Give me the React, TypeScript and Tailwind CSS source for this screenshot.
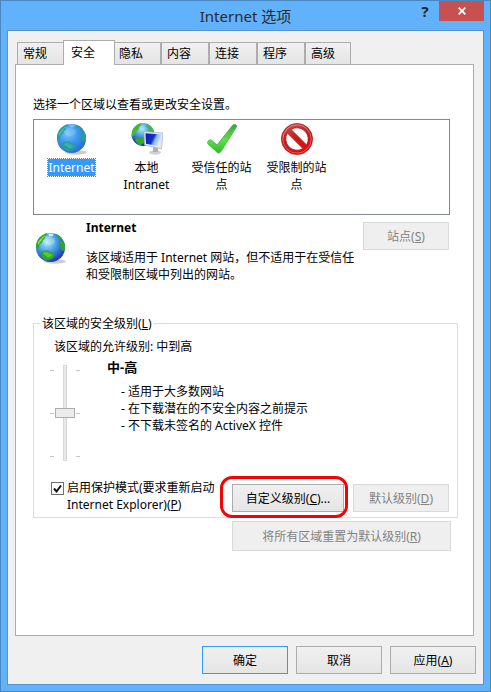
import { useState } from "react";
import type { ReactNode } from "react";

const tabs = ["常规", "安全", "隐私", "内容", "连接", "程序", "高级"];

const levelNotes = [
  "- 适用于大多数网站",
  "- 在下载潜在的不安全内容之前提示",
  "- 不下载未签名的 ActiveX 控件",
];

function Globe({ id, selected }: { id: string; selected?: boolean }) {
  const land = selected ? "#2b9c9c" : "#2fa52c";
  const landLight = selected ? "#4fb4bf" : "#7fdc48";
  return (
    <svg viewBox="0 0 32 32" className="block h-8 w-8" aria-hidden="true">
      <defs>
        <radialGradient id={id} cx="0.38" cy="0.32" r="0.72">
          <stop offset="0" stopColor={selected ? "#79c6fa" : "#b5ecfd"} />
          <stop offset="0.5" stopColor={selected ? "#3b95ee" : "#3f97e4"} />
          <stop offset="1" stopColor={selected ? "#2569d4" : "#1c30ac"} />
        </radialGradient>
      </defs>
      <ellipse cx="20" cy="29.500" rx="11" ry="2.200" fill="#000" opacity="0.2" />
      <circle cx="15.500" cy="15.500" r="14.600" fill={`url(#${id})`} />
      <path d="M2 9.500C4 5 8 2 12 1.300l-.5 2-2 1 .8 2-2.300 1.700-1 2.500-2.500 2-.5 3-2 2.500C.8 15 1 12 2 9.500z" fill={land} />
      <path d="M4.500 8c1.500-2 3.500-4 5.500-4.800l-.5 1.800-2 1.500-.5 2-2.300 2-.7 2-1.500-1c0-1.200 1-2.300 2-3.500z" fill={landLight} />
      <path d="M5.500 20.500l3-1.800 4.500-.2 2.500 1.500 3.500 1 .8 2.500-2.300 3-4 1.800-3.500 0C7.500 26.500 5.500 23.500 5.500 20.500z" fill={land} />
      <path d="M7.500 21l2.500-1 3 .2 2 1.600 2.500.6-1.500 2-3 1.200z" fill={landLight} opacity="0.6" />
      <path d="M24.500 11l1.500-2 2.300-.5c1.300 2.500 2 5 1.700 8.500L28 19l-1.700-1-.5-2.500-1.600-2z" fill={land} />
      <path d="M20 2.200l3 .6 3 2.200 1.500 2.500-2.500-.5-2-2-2.500-.8z" fill={land} />
      <path d="M13 1.500l5.500.3-.5 2.200-3.500.5z" fill="#e8faff" opacity={selected ? 0.35 : 0.8} />
      <ellipse cx="14" cy="9" rx="6" ry="4" fill="#fff" opacity={selected ? 0.12 : 0.22} />
    </svg>
  );
}

function IntranetIcon() {
  return (
    <svg viewBox="0 0 32 32" className="block h-8 w-8" aria-hidden="true">
      <defs>
        <radialGradient id="intranet-sea" cx="0.45" cy="0.25" r="0.75">
          <stop offset="0" stopColor="#b5ecfd" />
          <stop offset="0.5" stopColor="#388cdb" />
          <stop offset="1" stopColor="#142b96" />
        </radialGradient>
        <linearGradient id="intranet-screen" x1="0" y1="0" x2="1" y2="0.4">
          <stop offset="0" stopColor="#0a1c9c" />
          <stop offset="0.55" stopColor="#1431d4" />
          <stop offset="0.7" stopColor="#8ab8fb" />
          <stop offset="1" stopColor="#dcecff" />
        </linearGradient>
      </defs>
      <circle cx="12" cy="11.500" r="11.400" fill="url(#intranet-sea)" />
      <path d="M1.300 8C3 4 6 1.200 10 .3l.5 1.700-2 1.500-1 3-2.500 2-1 3-3.300 2z" fill="#48b82e" />
      <path d="M4 16l4-2 5 1.500.5 4-4 3C6.500 21.500 5 19 4 16z" fill="#35a62a" />
      <path d="M16 1l4 2.500 2.800 4.500-1 1.500-3-1-1-3-2.800-2z" fill="#48b82e" />
      <ellipse cx="24" cy="29.500" rx="6" ry="2.200" fill="#cfd1d4" />
      <path d="M22 24h5v5h-5z" fill="#aeb1b7" />
      <path d="M13 8.500l19 1.500-1.500 16L13.500 22z" fill="#e4e8ef" stroke="#a9b0bb" strokeWidth="0.7" />
      <path d="M14.500 10.300l15.700 1.300-1.200 12-14-2.900z" fill="url(#intranet-screen)" />
    </svg>
  );
}

function CheckIcon() {
  return (
    <svg viewBox="0 0 32 32" className="block h-8 w-8" aria-hidden="true">
      <defs>
        <linearGradient id="trusted" x1="0" y1="0" x2="0" y2="1">
          <stop offset="0" stopColor="#3aa63a" />
          <stop offset="0.55" stopColor="#5fe04a" />
          <stop offset="1" stopColor="#2fba2b" />
        </linearGradient>
      </defs>
      <path
        d="M1.500 19.500c0-1.500 2.500-3.200 4-2.500l5.500 5L26 3c1-1.500 2.500-2 3.800-1.300 1 .6 1 1.800.4 2.800L15 28.500c-1.200 1.800-3.500 2-4.500.3L2.500 21.500c-.6-.7-1-1.300-1-2z"
        fill="url(#trusted)"
        stroke="#3bab35"
        strokeWidth="0.7"
      />
    </svg>
  );
}

function BlockedIcon() {
  return (
    <svg viewBox="0 0 32 32" className="block h-8 w-8" aria-hidden="true">
      <defs>
        <linearGradient id="restricted" x1="0.2" y1="0" x2="0.6" y2="1">
          <stop offset="0" stopColor="#cf5354" />
          <stop offset="0.5" stopColor="#c01c1e" />
          <stop offset="1" stopColor="#f00606" />
        </linearGradient>
      </defs>
      <path
        fillRule="evenodd"
        d="M16 .4a15.600 15.600 0 1 0 0 31.200 15.600 15.600 0 0 0 0-31.200zM6.400 10.100A11.300 11.300 0 0 0 21.900 25.600zM10.100 6.400A11.300 11.300 0 0 1 25.600 21.900z"
        fill="url(#restricted)"
        stroke="#a61416"
        strokeWidth="0.7"
      />
      <circle cx="16" cy="16" r="14.200" fill="none" stroke="#fff" strokeWidth="0.8" opacity="0.4" />
    </svg>
  );
}

const zones = [
  { id: "internet", lines: ["Internet"], icon: <Globe id="zone-sea" selected /> },
  { id: "intranet", lines: ["本地", "Intranet"], icon: <IntranetIcon /> },
  { id: "trusted", lines: ["受信任的站", "点"], icon: <CheckIcon /> },
  { id: "restricted", lines: ["受限制的站", "点"], icon: <BlockedIcon /> },
];

type PushButtonProps = {
  children: ReactNode;
  className?: string;
  disabled?: boolean;
  primary?: boolean;
};

function PushButton({ children, className = "w-[86px]", disabled, primary }: PushButtonProps) {
  const look = disabled
    ? "border-[#d9d9d9] bg-[#efefef] text-[#838383]"
    : primary
      ? "border-[#3399ff] bg-linear-to-b from-[#f0f0f0] to-[#e5e5e5]"
      : "border-[#acacac] bg-linear-to-b from-[#f0f0f0] to-[#e5e5e5]";
  return (
    <button type="button" disabled={disabled} className={`min-h-7 shrink-0 border text-center ${look} ${className}`}>
      {children}
    </button>
  );
}

function Ticks() {
  return (
    <div className="flex h-[87px] flex-col justify-between">
      <span className="h-px w-1 bg-[#c4c4c4]" />
      <span className="h-px w-1 bg-[#c4c4c4]" />
      <span className="h-px w-1 bg-[#c4c4c4]" />
    </div>
  );
}

export default function App() {
  const [tab, setTab] = useState("安全");
  const [zone, setZone] = useState("internet");
  const [level, setLevel] = useState(1);
  const [protectedMode, setProtectedMode] = useState(true);

  return (
    <div className="flex min-h-screen flex-col border border-[#4a88c4] bg-[#62b1fb] px-1.5 pb-1.5 font-['Noto_Sans','Noto_Sans_CJK_SC',sans-serif] text-xs leading-[17px] text-black">
      {/* Title bar */}
      <header className="grid h-[29px] grid-cols-[1fr_auto_1fr]">
        <h1 className="col-start-2 pt-1 text-[15px] leading-[22px] text-[#2a2a2a]">Internet 选项</h1>
        <div className="flex items-start justify-end">
          <button type="button" aria-label="帮助" className="h-5 w-7 font-['Open_Sans',sans-serif] text-[15px] leading-5 font-bold text-[#222]">
            ?
          </button>
          <button type="button" aria-label="关闭" className="flex h-5 w-[45px] items-center justify-center bg-[#c75050]">
            <svg viewBox="0 0 8 8" className="h-2 w-2" aria-hidden="true">
              <path d="M.7.7l6.600 6.600M7.300.7L.7 7.300" stroke="#fff" strokeWidth="1.800" />
            </svg>
          </button>
        </div>
      </header>

      <main className="flex flex-1 flex-col border border-[#5594d3] bg-[#f0f0f0] pt-[9px] pr-[9px] pb-2.5 pl-[7px]">
        {/* Tabs, the active one covers the panel border */}
        <div role="tablist" className="relative -mb-px flex h-[25px] items-end pl-0.5">
          {tabs.map((name) => (
            <button
              key={name}
              type="button"
              role="tab"
              aria-selected={tab === name}
              onClick={() => setTab(name)}
              className={
                tab === name
                  ? "z-10 -mx-0.5 h-[25px] w-[52px] border border-b-0 border-[#acacac] bg-white pb-0.5 pl-[7px] text-left"
                  : "mb-px h-[22px] w-12 border border-b-0 border-[#acacac] bg-linear-to-b from-[#f0f0f0] to-[#e5e5e5] pl-[5px] text-left last:w-[46px]"
              }
            >
              {name}
            </button>
          ))}
        </div>

        <section className="flex-1 border border-[#acacac] bg-white pt-[31px] pr-[15px] pl-[17px]">
          <p>选择一个区域以查看或更改安全设置。</p>
          <div className="mt-1.5 mr-2 flex h-24 border border-[#828790] pt-[3px]">
            {zones.map((z) => (
              <button
                key={z.id}
                type="button"
                onClick={() => setZone(z.id)}
                className="flex w-[75px] flex-col items-center"
              >
                {z.icon}
                <span
                  className={
                    zone === z.id
                      ? "mt-[3px] border border-dotted border-[#cc6600] bg-[#3399ff] bg-clip-padding text-white"
                      : "mt-[3px] border border-transparent"
                  }
                >
                  {z.lines.map((line) => (
                    <span key={line} className="block">
                      {line}
                    </span>
                  ))}
                </span>
              </button>
            ))}
          </div>

          {/* Description of the selected zone */}
          <div className="mt-1 mr-[9px] flex items-start">
            <div className="mt-[13px] ml-0.5 shrink-0">
              <Globe id="info-sea" />
            </div>
            <div className="ml-[19px] flex-1">
              <h2 className="font-bold">Internet</h2>
              <p className="mt-[13px]">
                该区域适用于 Internet 网站，但不适用于在受信任和受限制区域中列出的网站。
              </p>
            </div>
            <PushButton disabled className="mt-[3px] w-[86px]">
              站点(<u>S</u>)
            </PushButton>
          </div>

          <fieldset className="mt-8 border border-[#dcdcdc] pr-2 pb-1 pl-4">
            <legend className="-ml-2.5 px-0.5">
              该区域的安全级别(<u>L</u>)
            </legend>
            <p className="mt-1.5 ml-1">该区域的允许级别: 中到高</p>
            <div className="mt-1 flex">
              <div className="mt-1.5 flex h-24 items-center">
                <Ticks />
                <input
                  type="range"
                  aria-label="安全级别"
                  min={0}
                  max={2}
                  value={level}
                  onChange={(e) => setLevel(Number(e.target.value))}
                  className="mx-px h-24 w-[22px] appearance-none bg-transparent [writing-mode:vertical-lr] [&::-webkit-slider-runnable-track]:mx-auto [&::-webkit-slider-runnable-track]:h-full [&::-webkit-slider-runnable-track]:w-1 [&::-webkit-slider-runnable-track]:border [&::-webkit-slider-runnable-track]:border-[#d6d6d6] [&::-webkit-slider-runnable-track]:bg-[#e7eaea] [&::-webkit-slider-thumb]:-ml-[9px] [&::-webkit-slider-thumb]:h-2.5 [&::-webkit-slider-thumb]:w-5 [&::-webkit-slider-thumb]:appearance-none [&::-webkit-slider-thumb]:border [&::-webkit-slider-thumb]:border-[#acacac] [&::-webkit-slider-thumb]:bg-[#ececec]"
                />
                <Ticks />
              </div>
              <div className="ml-[27px]">
                <h3 className="text-[13px] font-bold">中-高</h3>
                <ul className="mt-[7px] ml-3.5">
                  {levelNotes.map((note) => (
                    <li key={note}>{note}</li>
                  ))}
                </ul>
              </div>
            </div>

            <div className="mt-[18px] flex items-start">
              <label className="flex w-[182px] gap-[3px]">
                <span className="relative mt-[3px] ml-px h-[13px] w-[13px] shrink-0">
                  <input
                    type="checkbox"
                    checked={protectedMode}
                    onChange={(e) => setProtectedMode(e.target.checked)}
                    className="peer block h-[13px] w-[13px] appearance-none border border-[#707070] bg-white"
                  />
                  <svg viewBox="0 0 13 13" className="pointer-events-none absolute inset-0 hidden peer-checked:block" aria-hidden="true">
                    <path d="M3 6.500l2.500 3L10 3.500" fill="none" stroke="#111" strokeWidth="2" />
                  </svg>
                </span>
                <span>
                  启用保护模式(要求重新启动
                  <br />
                  Internet Explorer)(<u>P</u>)
                </span>
              </label>
              {/* Highlight ring around the custom level button */}
              <div className="relative mt-[5px] mr-[9px]">
                <PushButton className="w-28">
                  自定义级别(<u>C</u>)...
                </PushButton>
                <span className="pointer-events-none absolute -top-2 -right-1 -bottom-1.5 -left-3 rounded-xl border-[3px] border-[#f00505]" />
              </div>
              <PushButton disabled className="mt-[5px] w-24">
                默认级别(<u>D</u>)
              </PushButton>
            </div>
          </fieldset>
          <div className="mt-[3px] mr-[7px] flex justify-end">
            <PushButton disabled className="h-[30px] w-[219px]">
              将所有区域重置为默认级别(<u>R</u>)
            </PushButton>
          </div>
        </section>

        <footer className="-mr-0.5 mt-2.5 flex justify-end gap-2">
          <PushButton primary>确定</PushButton>
          <PushButton>取消</PushButton>
          <PushButton>
            应用(<u>A</u>)
          </PushButton>
        </footer>
      </main>
    </div>
  );
}
